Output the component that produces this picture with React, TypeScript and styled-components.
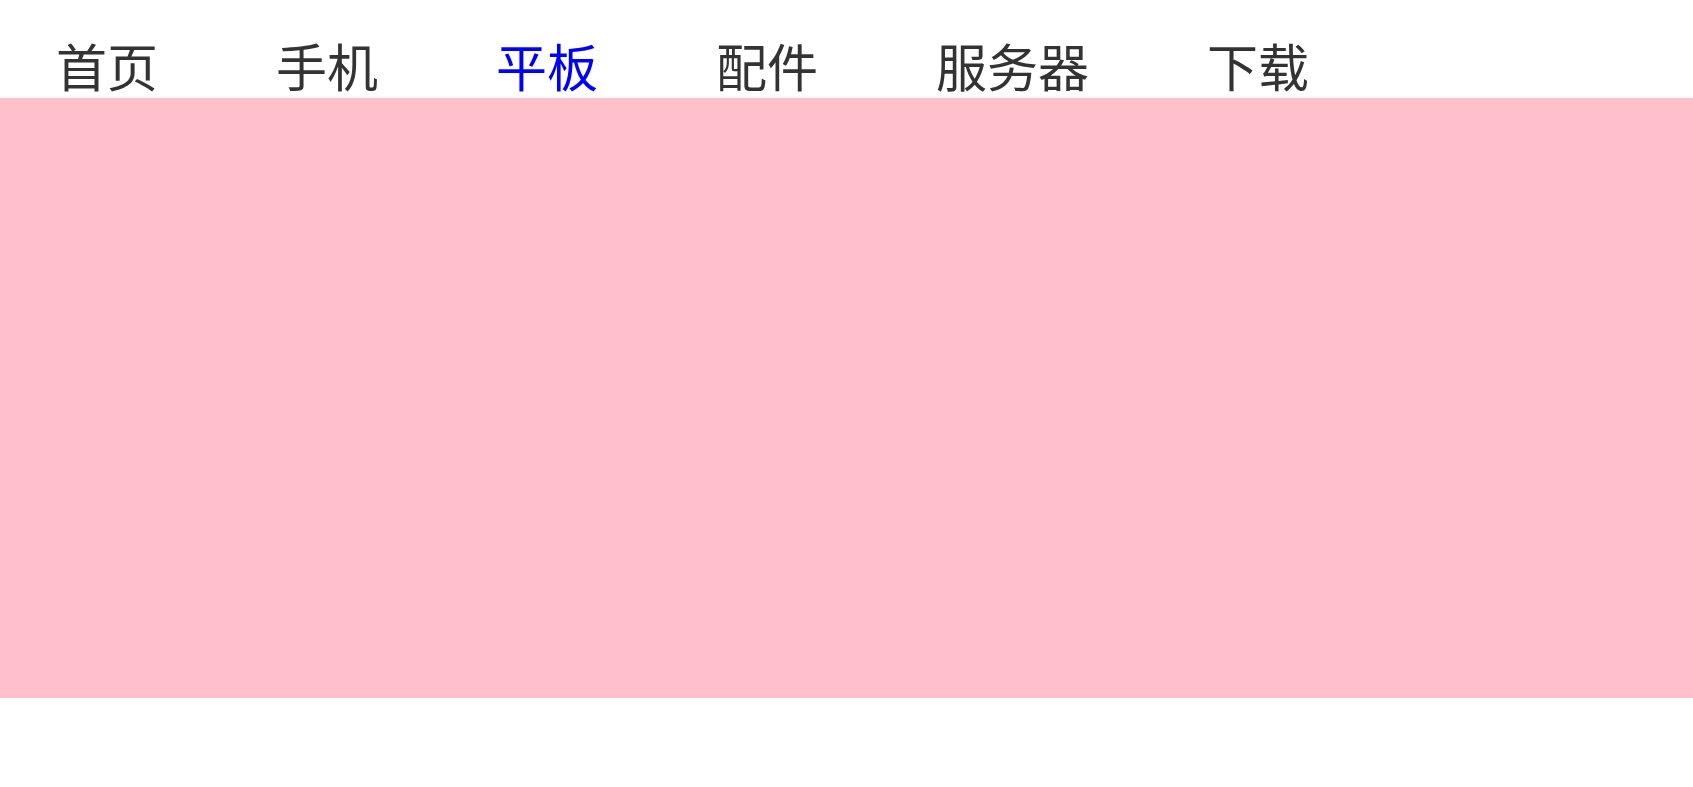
import React from "react";
import styled, { createGlobalStyle } from "styled-components";

const Global = createGlobalStyle`
  html, body { margin: 0; padding: 0; background: #fff; }
  body { font-family: "Noto Sans CJK SC", "Noto Sans", sans-serif; }
`;

const Nav = styled.ul`
  list-style: none;
  margin: 0;
  padding: 0 0 0 56px;
  height: 98px;
  display: flex;
  align-items: flex-end;
  gap: 118px;
`;

const Item = styled.li<{ $active?: boolean }>`
  font-size: 51px;
  line-height: 50px;
  padding-bottom: 8px;
  color: ${(p) => (p.$active ? "#0000ff" : "#333333")};
  cursor: pointer;
`;

const Banner = styled.div`
  height: 600px;
  background: #ffc0cb;
`;

const items = ["首页", "手机", "平板", "配件", "服务器", "下载"];

export default function App() {
  return (
    <>
      <Global />
      <Nav>
        {items.map((t, i) => (
          <Item key={t} $active={i === 2}>
            {t}
          </Item>
        ))}
      </Nav>
      <Banner />
    </>
  );
}
